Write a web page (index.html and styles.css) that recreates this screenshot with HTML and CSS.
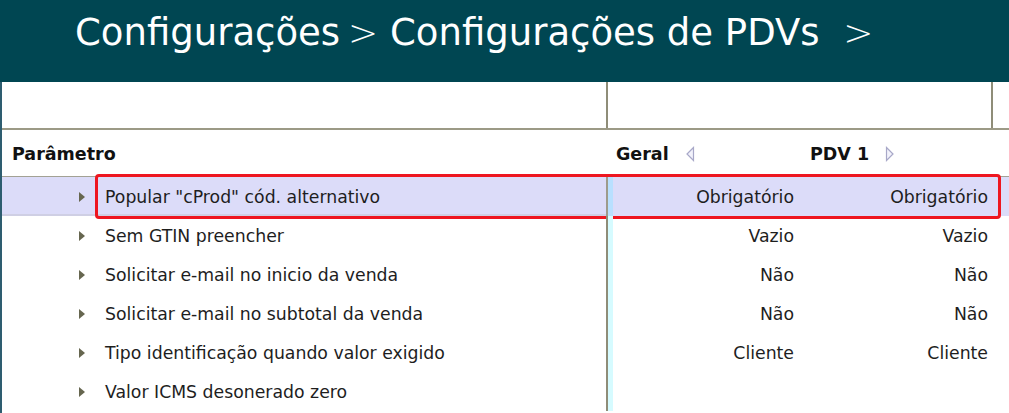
FILE: index.html
```html
<!DOCTYPE html>
<html lang="pt">
<head>
<meta charset="utf-8">
<link rel="stylesheet" href="styles.css">
</head>
<body>
<header class="topbar">
  <h1 class="crumbs">Configurações<span class="sep">&gt;</span> Configurações de PDVs <span class="sep2">&gt;</span></h1>
</header>
<main class="frame">
  <div class="grid blank-row">
    <div class="c-param"></div>
    <div class="c-vals"></div>
    <div class="c-rest"></div>
  </div>
  <div class="grid head-row">
    <div class="c-param h">Parâmetro</div>
    <div class="c-v1 h"><span>Geral</span>
      <svg class="nav" width="10" height="16" viewBox="0 0 10 16"><path d="M8.5 1.5 L2 8 L8.5 14.5 Z" fill="#f2f2fb" stroke="#a8a8c8" stroke-width="1.2"/></svg>
    </div>
    <div class="c-v2 h"><span>PDV 1</span>
      <svg class="nav" width="10" height="16" viewBox="0 0 10 16"><path d="M1.5 1.5 L8 8 L1.5 14.5 Z" fill="#f2f2fb" stroke="#a8a8c8" stroke-width="1.2"/></svg>
    </div>
    <div class="c-rest"></div>
  </div>
  <div class="rows">
    <div class="grid row sel">
      <div class="cell c-param"><span class="tri"></span><span class="label">Popular "cProd" cód. alternativo</span></div>
      <div class="cell c-v1">Obrigatório</div>
      <div class="cell c-v2">Obrigatório</div>
      <div class="cell c-rest"></div>
      <div class="mark"></div>
    </div>
    <div class="grid row">
      <div class="cell c-param"><span class="tri"></span><span class="label">Sem GTIN preencher</span></div>
      <div class="cell c-v1">Vazio</div>
      <div class="cell c-v2">Vazio</div>
      <div class="cell c-rest"></div>
    </div>
    <div class="grid row">
      <div class="cell c-param"><span class="tri"></span><span class="label">Solicitar e-mail no inicio da venda</span></div>
      <div class="cell c-v1">Não</div>
      <div class="cell c-v2">Não</div>
      <div class="cell c-rest"></div>
    </div>
    <div class="grid row">
      <div class="cell c-param"><span class="tri"></span><span class="label">Solicitar e-mail no subtotal da venda</span></div>
      <div class="cell c-v1">Não</div>
      <div class="cell c-v2">Não</div>
      <div class="cell c-rest"></div>
    </div>
    <div class="grid row">
      <div class="cell c-param"><span class="tri"></span><span class="label">Tipo identificação quando valor exigido</span></div>
      <div class="cell c-v1">Cliente</div>
      <div class="cell c-v2">Cliente</div>
      <div class="cell c-rest"></div>
    </div>
    <div class="grid row">
      <div class="cell c-param"><span class="tri"></span><span class="label">Valor ICMS desonerado zero</span></div>
      <div class="cell c-v1"></div>
      <div class="cell c-v2"></div>
      <div class="cell c-rest"></div>
    </div>
  </div>
</main>
</body>
</html>
```

FILE: styles.css
```css
* { box-sizing: border-box; }
html, body { margin: 0; padding: 0; }
body {
  width: 1009px;
  height: 413px;
  overflow: hidden;
  background: #fff;
  font-family: "DejaVu Sans", Verdana, sans-serif;
  color: #1e1e1e;
}
.topbar {
  height: 82px;
  background: #004652;
  padding: 10px 0 0 75px;
}
.crumbs {
  margin: 0;
  font-weight: normal;
  font-size: 37px;
  line-height: 46px;
  color: #fff;
  white-space: nowrap;
}
.crumbs .sep { margin-left: 8px; font-size: 36px; font-weight: 200; }
.crumbs .sep2 { margin-left: 12px; font-size: 36px; font-weight: 200; }
.frame {
  border-left: 2px solid #2e5d70;
  height: 331px;
}
.grid {
  display: grid;
  grid-template-columns: 604px 194px 193px 1fr;
  position: relative;
}
.blank-row {
  grid-template-columns: 604px 387px 1fr;
  height: 48px;
  border-bottom: 2px solid #9c9a86;
}
.blank-row .c-vals { border-left: 2px solid #8f8d78; border-right: 2px solid #8f8d78; }
.head-row {
  height: 47px;
  border-bottom: 1px solid #a3a294;
  align-items: center;
}
.h {
  font-weight: bold;
  font-size: 17.5px;
  color: #111;
  display: flex;
  align-items: center;
}
.head-row .c-param { padding-left: 10px; padding-top: 2px; }
.head-row .c-v1 { padding-left: 10px; padding-top: 2px; }
.head-row .c-v2 { padding-left: 10px; padding-top: 2px; }
.nav { margin-left: 16px; }
.row {
  height: 39px;
  font-size: 17.3px;
}
.cell { height: 39px; display: flex; align-items: center; }
.row.sel { background: #dcdcf9; }
.row .c-param { padding-left: 77px; }
.tri {
  width: 0; height: 0;
  border-left: 6px solid #66664f;
  border-top: 5px solid transparent;
  border-bottom: 5px solid transparent;
  margin-right: 20px;
}
.label { color: #1e1e1e; }
.row .c-v1 {
  border-left: 2px solid #8f8d78;
  box-shadow: inset 5px 0 0 #d6fbff;
  justify-content: flex-end;
  padding-right: 6px;
}
.row.sel .c-v1 { box-shadow: inset 5px 0 0 #b9e0ff; border-left-color: #9d9b8c; }
.row.sel .c-param { box-shadow: inset 0 -2px 0 #cfcfe4; }
.row .c-v2 { justify-content: flex-end; padding-right: 5px; }
.row .mark {
  position: absolute;
  left: 93px;
  top: -3px;
  width: 906px;
  height: 45px;
  border: 3.5px solid #ee1620;
  border-radius: 4px;
  pointer-events: none;
}
```
